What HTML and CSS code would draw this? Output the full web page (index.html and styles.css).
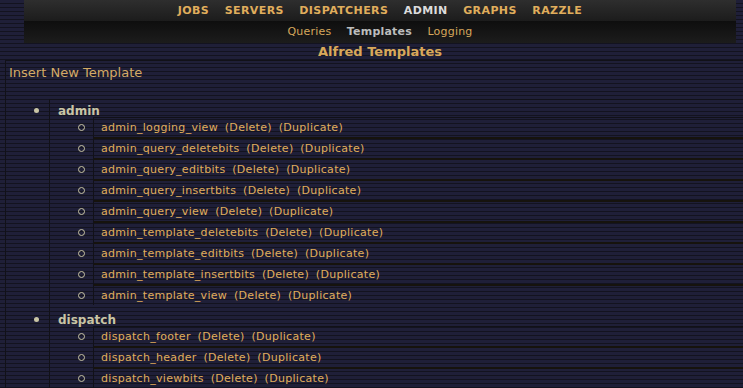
FILE: index.html
```html
<!DOCTYPE html>
<html lang="en">
<head>
  <meta charset="UTF-8" />
  <title>Alfred Templates</title>
  <link rel="stylesheet" href="styles.css">
</head>
<body>

  <div class="header">
    <div class="mainnav">
      <a href="#">JOBS</a>
      <a href="#">SERVERS</a>
      <a href="#">DISPATCHERS</a>
      <a href="#" class="on">ADMIN</a>
      <a href="#">GRAPHS</a>
      <a href="#">RAZZLE</a>
    </div>
    <div class="subnav">
      <a href="#">Queries</a>
      <a href="#" class="on">Templates</a>
      <a href="#">Logging</a>
    </div>
    <h1>Alfred Templates</h1>
  </div>

  <div class="content">
    <a href="#" class="insert">Insert New Template</a>

    <ul class="groups">
      <li>
        <span class="group">admin</span>
        <ul class="items">
          <li><a href="#">admin_logging_view</a> <a href="#">(Delete)</a> <a href="#">(Duplicate)</a></li>
          <li><a href="#">admin_query_deletebits</a> <a href="#">(Delete)</a> <a href="#">(Duplicate)</a></li>
          <li><a href="#">admin_query_editbits</a> <a href="#">(Delete)</a> <a href="#">(Duplicate)</a></li>
          <li><a href="#">admin_query_insertbits</a> <a href="#">(Delete)</a> <a href="#">(Duplicate)</a></li>
          <li><a href="#">admin_query_view</a> <a href="#">(Delete)</a> <a href="#">(Duplicate)</a></li>
          <li><a href="#">admin_template_deletebits</a> <a href="#">(Delete)</a> <a href="#">(Duplicate)</a></li>
          <li><a href="#">admin_template_editbits</a> <a href="#">(Delete)</a> <a href="#">(Duplicate)</a></li>
          <li><a href="#">admin_template_insertbits</a> <a href="#">(Delete)</a> <a href="#">(Duplicate)</a></li>
          <li><a href="#">admin_template_view</a> <a href="#">(Delete)</a> <a href="#">(Duplicate)</a></li>
        </ul>
      </li>
      <li>
        <span class="group">dispatch</span>
        <ul class="items">
          <li><a href="#">dispatch_footer</a> <a href="#">(Delete)</a> <a href="#">(Duplicate)</a></li>
          <li><a href="#">dispatch_header</a> <a href="#">(Delete)</a> <a href="#">(Duplicate)</a></li>
          <li><a href="#">dispatch_viewbits</a> <a href="#">(Delete)</a> <a href="#">(Duplicate)</a></li>
        </ul>
      </li>
    </ul>
  </div>

</body>
</html>
```

FILE: styles.css
```css
body {
  margin: 0;
  font-family: "DejaVu Sans", Verdana, sans-serif;
  font-size: 11px;
  color: #c9c5a5;
  background: repeating-linear-gradient(to bottom, #1f1f38 0, #1f1f38 3px, #13131f 3px, #13131f 4px);
}
a { color: #e0ae5c; text-decoration: none; }

.header { margin: 0 7px 0 24px; text-align: center; }
.mainnav {
  height: 21px;
  line-height: 22px;
  background: linear-gradient(#2e2e2e, #1c1c1c);
}
.mainnav a {
  font-weight: bold;
  letter-spacing: 0.4px;
  margin: 0 6px;
}
.mainnav a.on { color: #dcdcdc; }
.subnav {
  height: 22px;
  line-height: 22px;
  background: linear-gradient(#0e0e0e, #1c1c1c);
}
.subnav a { margin: 0 6px; color: #d6a75c; letter-spacing: 0.2px; }
.subnav a.on { color: #bdbdbd; font-weight: bold; }
.header h1 {
  margin: 0;
  font-size: 13px;
  line-height: 17px;
  color: #d9a85a;
}

.content {
  margin: 0 0 0 5px;
  padding: 4px 0 0 3px;
  border-left: 1px solid #111118;
  border-top: 1px solid #111118;
}
.insert { font-size: 13px; color: #d4aa66; }

.groups {
  margin: 19px 0 0 40px;
  padding: 0;
  border-left: 1px solid #111118;
  border-top: 1px solid #111118;
  list-style: none;
}
.groups > li { position: relative; padding: 4px 0 0 8px; margin-bottom: 4px; }
.groups > li::before {
  content: "";
  position: absolute;
  left: -16px;
  top: 8px;
  width: 5px;
  height: 5px;
  border-radius: 50%;
  background: #c9c5a5;
}
.group { font-weight: bold; font-size: 12px; }

.items {
  list-style: none;
  margin: -1px 0 0 35px;
  padding: 0;
  border-left: 1px solid #111118;
  border-top: 1px solid #111118;
}
.items li {
  position: relative;
  padding: 2px 0 2px 7px;
  height: 15px;
  line-height: 15px;
  letter-spacing: 0.3px;
  border-bottom: 2px solid #16130d;
}
.items li:last-child { border-bottom: none; }
.items li::before {
  content: "";
  position: absolute;
  left: -16px;
  top: 6px;
  width: 5px;
  height: 5px;
  border-radius: 50%;
  border: 1px solid #c9c5a5;
}
.items a + a { margin-left: 3px; }
```
